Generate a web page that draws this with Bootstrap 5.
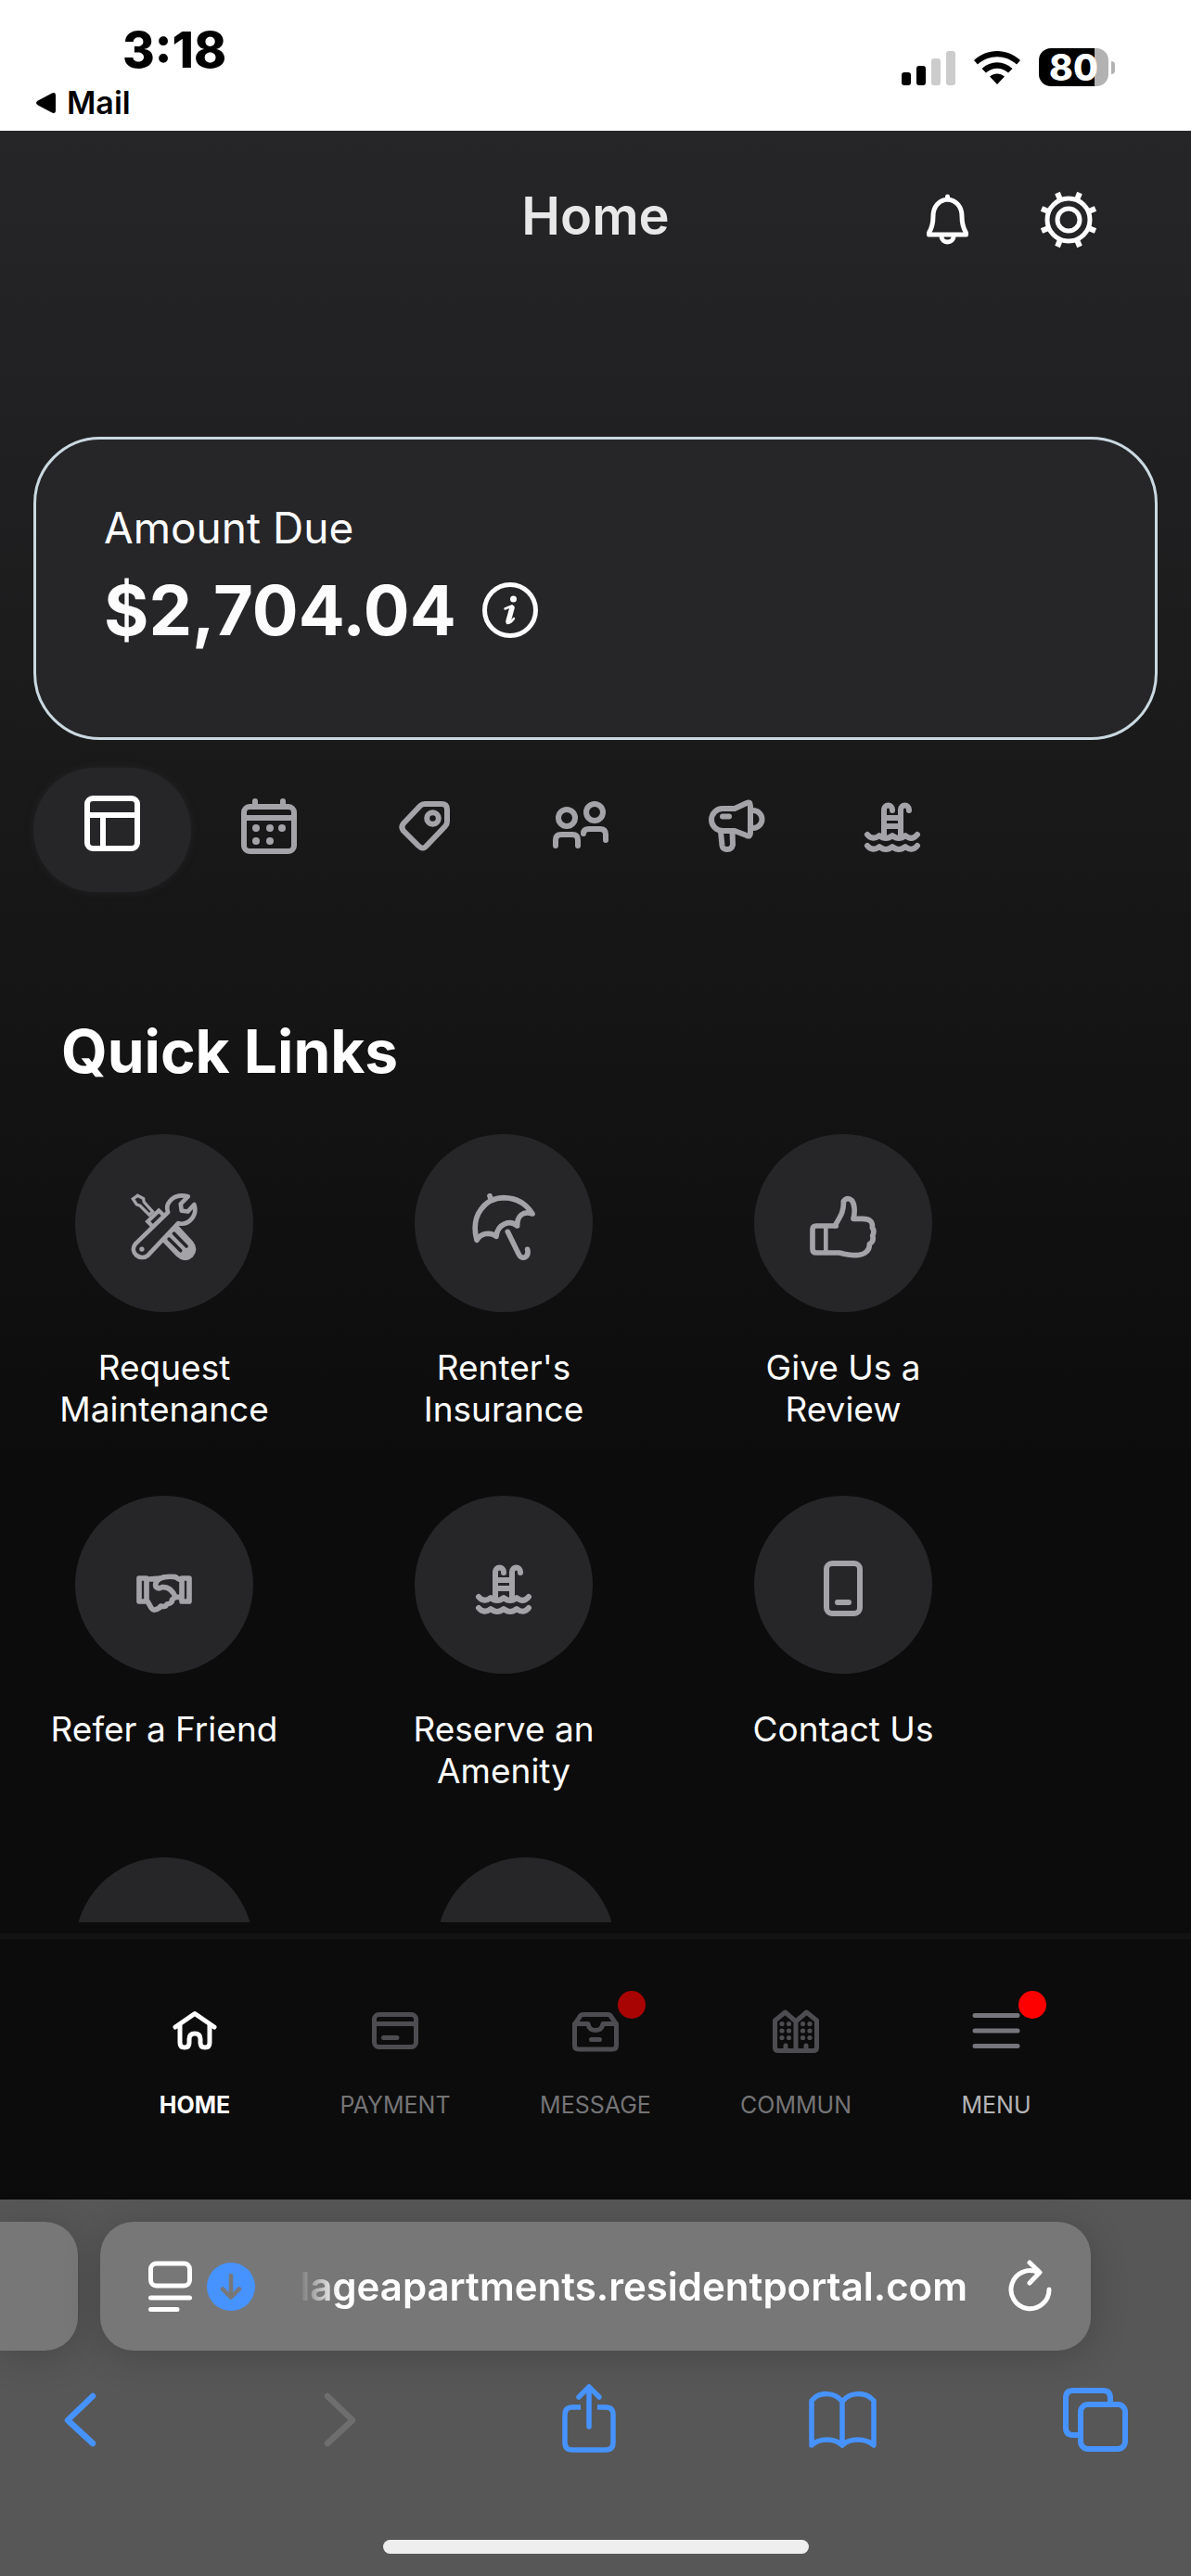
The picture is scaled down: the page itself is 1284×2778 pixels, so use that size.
<!DOCTYPE html>
<html lang="en">
<head>
<meta charset="utf-8">
<meta name="viewport" content="width=device-width, initial-scale=1">
<title>Home</title>
<link href="https://cdn.jsdelivr.net/npm/bootstrap@5.3.0/dist/css/bootstrap.min.css" rel="stylesheet">
<style>
body{font-family:Inter,"Liberation Sans",sans-serif;background:#0c0c0c;color:#fff}
svg{display:block;flex:none;fill:none;stroke:currentColor;stroke-linecap:round;stroke-linejoin:round}
svg.solid{stroke:none}
.btn-bare{border:0;padding:0;background:none;color:inherit;display:block}
.status{background:#fff;color:#000;padding:28px 82px 11px 36px}
.clock{font-size:53px;line-height:52px;font-weight:800;padding-left:96px}
.back-app{font-size:34px;line-height:38px;font-weight:600;color:#000;gap:12px;margin-top:12px}
.status-icons{gap:19px;padding-top:24px}
.battery{width:75px;height:41px;border-radius:13px;background:linear-gradient(90deg,#000 60px,#b2b2b2 60px);color:#fff;font-size:39px;line-height:41px;font-weight:800}
.battery-tip{width:4px;height:14px;border-radius:0 6px 6px 0;background:#b2b2b2;margin-left:3px}
.app{background:linear-gradient(#262628,#0c0c0c 64%);min-height:0}
.topbar{display:grid;grid-template-columns:1fr auto 1fr;padding:62px 102px 200px}
.page-title{font-size:56px;line-height:60px;font-weight:600;color:#e8e8e8}
.topbar-actions{gap:70px}
.due{margin:0 36px;border:3px solid #cad9e1;border-radius:72px;background:#262628;padding:65px 73px 97px;color:#fcfcfd}
.due-label{font-size:46px;line-height:60px}
.due-sum{font-size:74px;line-height:80px;font-weight:700;margin-top:19px;gap:28px}
.tabs-row{margin:30px 36px 0;color:#a4a4a8}
.tab-btn{width:168px;height:134px;padding-top:27px}
.tab-btn.active{width:170px;border-radius:72px;background:#262628;color:#fff;box-shadow:0 0 8px rgba(54,54,58,.4)}
.section-title{font-size:64px;line-height:76px;font-weight:700;margin:134px 66px 51px}
.links-grid{padding-left:36px;gap:71px}
.links-row{gap:84px}
.quick{width:282px;color:#fff;text-decoration:none}
.quick-wide{width:330px}
.quick-icon{width:192px;height:192px;border-radius:50%;background:#262628;color:#a4a4a8;padding-top:8px}
.quick-label{font-size:37px;line-height:45px;max-width:258px;min-height:90px;margin-top:37px;text-align:center}
.tabbar{margin-top:12px;border-top:6px solid #131313;background:#0c0c0c;padding:72px 102px 87px}
.tabbar a{flex:1 1 0;color:#4d4d51;text-decoration:none;font-size:25px;line-height:30px}
.tabbar span.cap{color:#747476;margin-top:38px}
.tabbar a.active,.tabbar a.active span.cap{color:#fff;font-weight:700}
.tabbar a.menu{color:#75757b}
.tabbar a.menu span.cap{color:#b4b4b6}
.dot{position:absolute;left:52px;top:-16px;width:30px;height:30px;border-radius:50%;background:#f00}
.dot-dim{background:#a90404}
.browser{background:#575757;padding:24px 0}
.addr-row{gap:24px}
.addr-prev{flex:none;width:84px;border-radius:0 36px 36px 0;background:#777;box-shadow:0 6px 40px rgba(0,0,0,.18)}
.addr{height:139px;margin-right:108px;border-radius:36px;background:#777;padding:0 39px 0 48px;box-shadow:0 6px 40px rgba(0,0,0,.18);min-width:0}
.addr-url{flex:1 1 0;min-width:0;margin:0 40px 0 46px;font-size:42px;line-height:56px;font-weight:600;text-align:right;white-space:nowrap;-webkit-mask-image:linear-gradient(90deg,transparent,#000 44px);mask-image:linear-gradient(90deg,transparent,#000 44px)}
.loader{margin-left:10px}
.tools-row{padding:35px 63px 0 46px;color:#4692ff}
.tools-row button:disabled{color:#6e6e6e}
.grip{width:459px;height:15px;border-radius:8px;background:#eee;margin:89px auto 0}
</style>
<script src="https://cdn.jsdelivr.net/npm/bootstrap@5.3.0/dist/js/bootstrap.bundle.min.js"></script>
</head>
<body class="vh-100 d-flex flex-column overflow-hidden">

<svg width="0" height="0" class="position-absolute" aria-hidden="true">
  <symbol id="pool" viewBox="0 0 72 72"><path d="M27 47V18a4.500 4.500 0 0 1 9 0v1M45 47V18a4.500 4.500 0 0 1 9 0v1M27 27h18M27 36h18M9 45q6 7 13 1q7 6 14 0q7 6 14 0q7 6 13-1M9 57q6 7 13 1q7 6 14 0q7 6 14 0q7 6 13-1"/></symbol>
</svg>

<header class="status d-flex justify-content-between align-items-start">
  <div>
    <div class="clock">3:18</div>
    <button class="btn-bare back-app d-flex align-items-center" type="button">
      <svg class="solid" width="24" height="24" viewBox="0 0 24 24"><path fill="#000" d="M5 9.500 20 1.500Q24 0 24 4V20Q24 24 20 22.500L5 14.500Q1 12 5 9.500Z"/></svg>Mail
    </button>
  </div>
  <div class="status-icons d-flex align-items-center">
    <svg class="solid" width="58" height="38" viewBox="0 0 58 38"><g fill="#000"><rect y="24" width="10" height="14" rx="3"/><rect x="16" y="17" width="10" height="21" rx="3"/></g><g fill="#ccc"><rect x="32" y="9" width="10" height="29" rx="3"/><rect x="48" y="1" width="10" height="37" rx="3"/></g></svg>
    <svg class="solid" width="52" height="38" viewBox="0 0 52 38"><path fill="#000" d="M1 11C15-2.500 37-2.500 51 11L47 15.500C35 4.500 17 4.500 5 15.500ZM9.500 20C19 11 33 11 42.500 20L38 24.500C31 18 21 18 14 24.500ZM18 28.500C23 24.500 29 24.500 34 28.500L26 37Z"/></svg>
    <div class="d-flex align-items-center"><div class="battery text-center">80</div><div class="battery-tip"></div></div>
  </div>
</header>

<div class="app flex-grow-1 d-flex flex-column">
<main class="flex-grow-1 overflow-hidden">
  <div class="topbar align-items-center">
    <span></span>
    <h1 class="page-title mb-2">Home</h1>
    <div class="topbar-actions d-flex justify-content-end">
      <button class="btn-bare" type="button" aria-label="Notifications"><svg width="60" height="60" viewBox="0 0 60 60" stroke-width="5"><path d="M29.500 5V8C20 9 14 16 14 26C14 36 12 40 9.500 44V46H49.500V44C47 40 45 36 45 26C45 16 39 9 29.500 8M23 48a6.500 6 0 0 0 13 0"/></svg></button>
      <button class="btn-bare" type="button" aria-label="Settings"><svg width="60" height="60" viewBox="0 0 60 60" stroke-width="5" overflow="visible"><circle cx="30" cy="30" r="23"/><circle cx="30" cy="30" r="12"/><path stroke-width="6" stroke-linecap="butt" d="M39.200 7.800 42 1M52.200 20.800 59 18M52.200 39.200 59 42M39.200 52.200 42 59M20.800 52.200 18 59M7.800 39.200 1 42M7.800 20.800 1 18M20.800 7.800 18 1"/></svg></button>
    </div>
  </div>

  <section class="due">
    <div class="due-label">Amount Due</div>
    <div class="due-sum d-flex align-items-center">$2,704.04
      <button class="btn-bare" type="button" aria-label="Amount details"><svg width="60" height="60" viewBox="0 0 60 60" stroke-width="5"><circle cx="30" cy="30" r="27.500"/><circle cx="33.500" cy="18" r="3.500" fill="currentColor" stroke="none"/><path stroke-width="5.500" d="M32 27.500 28 42"/><path stroke-width="2.500" d="M24.500 28.500Q29 26.500 32 25.500M27 44Q31 43.500 34 39"/></svg></button>
    </div>
  </section>

  <div class="tabs-row d-flex" role="tablist">
    <button class="btn-bare tab-btn d-flex align-items-start justify-content-center active" type="button" role="tab" aria-label="Dashboard"><svg width="72" height="72" viewBox="0 0 72 72" stroke-width="6"><rect x="9" y="6" width="54" height="54" rx="6"/><path d="M9 24H63M26 24V60"/></svg></button>
    <button class="btn-bare tab-btn d-flex align-items-start justify-content-center" type="button" role="tab" aria-label="Calendar"><svg width="72" height="72" viewBox="0 0 72 72" stroke-width="6"><rect x="9" y="15" width="54" height="48" rx="6"/><path d="M9 27H63M21 9V15M51 9V15"/><g fill="currentColor" stroke="none"><circle cx="22" cy="38" r="4"/><circle cx="37" cy="38" r="4"/><circle cx="50" cy="38" r="4"/><circle cx="22" cy="52" r="4"/><circle cx="37" cy="52" r="4"/></g></svg></button>
    <button class="btn-bare tab-btn d-flex align-items-start justify-content-center" type="button" role="tab" aria-label="Offers"><svg width="72" height="72" viewBox="0 0 72 72" stroke-width="6"><path d="M36 12H54Q60 12 60 18V31Q60 34 58 36L38 57Q34 62 29 57L13 41Q9.700 37 13 33L31 14Q33 12 36 12Z"/><circle cx="44.500" cy="27.500" r="6.300"/></svg></button>
    <button class="btn-bare tab-btn d-flex align-items-start justify-content-center" type="button" role="tab" aria-label="Groups"><svg width="72" height="72" viewBox="0 0 72 72" stroke-width="6"><circle cx="21" cy="27" r="9"/><circle cx="51" cy="21" r="9"/><path d="M9 57V51Q9 45 15 45H27Q33 45 33 51V57M39 44Q39 39 45 39H57Q63 39 63 45V51"/></svg></button>
    <button class="btn-bare tab-btn d-flex align-items-start justify-content-center" type="button" role="tab" aria-label="Announcements"><svg width="72" height="72" viewBox="0 0 72 72" stroke-width="6"><path d="M34 17H21a12 12 0 0 0 0 24H34L47 46Q51 48 51 43V14Q51 9 47 11ZM54 19a9 9 0 0 1 0 19M21 25.500H28M19 42 20.500 57Q21 61 26 61T32 56L31.500 42"/></svg></button>
    <button class="btn-bare tab-btn d-flex align-items-start justify-content-center" type="button" role="tab" aria-label="Amenities"><svg width="72" height="72" stroke-width="6"><use href="#pool"/></svg></button>
  </div>

  <h2 class="section-title">Quick Links</h2>
  <div class="links-grid d-flex flex-column">
    <div class="links-row d-flex">
      <a href="#" class="quick d-flex flex-column align-items-center">
        <span class="quick-icon d-flex align-items-center justify-content-center"><svg width="72" height="72" viewBox="62 80 217 217" stroke-width="14"><path fill="currentColor" stroke="none" d="M164 236 210 284Q240 310 264 286Q284 262 264 236L214 182Z"/><path stroke="#262628" stroke-width="11" d="M202 210 243 252M186 228 224 266"/><path stroke-width="10" stroke-linejoin="miter" d="M84 87 69 98 81 116 92 120 122 150 133 139 105 108 103 97Z"/><path stroke-width="13" stroke-linecap="butt" stroke-linejoin="miter" d="M168 150 153 136 117 171 132 186"/><path fill="#262628" d="M78 243 183 141C172 112 200 78 248 90L224 114 227 136 247 139 268 116C280 154 248 186 216 177L118 281C94 302 54 272 78 243Z"/><circle cx="98" cy="261" r="8" fill="currentColor" stroke="none"/></svg></span>
        <span class="quick-label">Request Maintenance</span></a>
      <a href="#" class="quick d-flex flex-column align-items-center">
        <span class="quick-icon d-flex align-items-center justify-content-center"><svg width="72" height="72" viewBox="21 51 216 216" stroke-width="17"><path d="M42 202C20 120 70 66 130 65C175 66 205 90 222 117C192 106 172 124 173 156C150 136 110 148 105 190C85 174 55 180 42 202ZM84 59 88 70M142 175 178 248C188 268 212 258 206 232"/></svg></span>
        <span class="quick-label">Renter's Insurance</span></a>
      <a href="#" class="quick d-flex flex-column align-items-center">
        <span class="quick-icon d-flex align-items-center justify-content-center"><svg width="72" height="72" viewBox="1119 51 216 216" stroke-width="17"><path d="M1204 156H1140Q1128 156 1128 168V231Q1128 243 1140 243H1215C1250 252 1280 256 1298 243Q1313 232 1312 215Q1328 205 1322 188Q1330 172 1321 162Q1325 133 1290 133H1260C1266 110 1264 85 1255 74Q1240 60 1228 77C1230 110 1218 125 1200 156"/><path stroke-width="14" d="M1171 156V243"/></svg></span>
        <span class="quick-label">Give Us a Review</span></a>
    </div>
    <div class="links-row d-flex">
      <a href="#" class="quick d-flex flex-column align-items-center">
        <span class="quick-icon d-flex align-items-center justify-content-center"><svg width="72" height="72" viewBox="33 21 216 216" stroke-width="17"><path d="M60 96H84V171H60ZM198 96H222V171H198ZM90 99 126 96C145 90 165 90 178 92Q186 98 196 102M138 93C118 98 110 112 114 124Q122 132 134 125C155 122 170 140 178 157H194M88 172C98 190 102 200 110 198Q124 196 130 186Q146 190 150 180Q168 176 166 166L178 157"/></svg></span>
        <span class="quick-label">Refer a Friend</span></a>
      <a href="#" class="quick d-flex flex-column align-items-center">
        <span class="quick-icon d-flex align-items-center justify-content-center"><svg width="72" height="72" stroke-width="6"><use href="#pool"/></svg></span>
        <span class="quick-label">Reserve an Amenity</span></a>
      <a href="#" class="quick d-flex flex-column align-items-center">
        <span class="quick-icon d-flex align-items-center justify-content-center"><svg width="72" height="72" viewBox="0 0 72 72" stroke-width="6"><rect x="18" y="9" width="36" height="54" rx="6"/><path d="M30 51H42"/></svg></span>
        <span class="quick-label">Contact Us</span></a>
    </div>
    <div class="links-row d-flex">
      <div class="quick d-flex flex-column align-items-center"><span class="quick-icon"></span></div>
      <div class="quick quick-wide d-flex flex-column align-items-center"><span class="quick-icon"></span></div>
    </div>
  </div>
</main>

<nav class="tabbar d-flex">
  <a href="#" class="active d-flex flex-column align-items-center"><span class="position-relative"><svg width="56" height="54" viewBox="0 0 56 54" stroke-width="5"><path d="M7 23 28 8.500 49 23M12 21V40q0 5 5 5t5-5V36q0-6 6-6t6 6v4q0 5 5 5t5-5V21"/></svg></span><span class="cap">HOME</span></a>
  <a href="#" class="d-flex flex-column align-items-center"><span class="position-relative"><svg width="56" height="54" viewBox="0 0 56 54" stroke-width="5"><rect x="5.500" y="9.500" width="45" height="35" rx="5"/><path d="M5.500 19.500H50.500M15.500 34.500H30"/></svg></span><span class="cap">PAYMENT</span></a>
  <a href="#" class="d-flex flex-column align-items-center"><span class="position-relative"><svg width="56" height="54" viewBox="0 0 56 54" stroke-width="5"><path d="M5.500 20 11 12Q12 9.500 15 9.500H41Q44 9.500 45 12L50.500 20V43Q50.500 47 46 47H10Q5.500 47 5.500 43ZM5.500 19.500H20Q21 26.500 28 26.500T36 19.500H50.500M23.500 36.500H32.500"/></svg><span class="dot dot-dim"></span></span><span class="cap">MESSAGE</span></a>
  <a href="#" class="d-flex flex-column align-items-center"><span class="position-relative"><svg width="56" height="54" viewBox="0 0 56 54" stroke-width="5"><path d="M5.500 16 16.500 7 28 17 39.500 7 50.500 16V45Q50.500 48.500 47 48.500H9Q5.500 48.500 5.500 45ZM28 16V48M17 43V47M39 43V47"/><g fill="currentColor" stroke="none"><circle cx="13" cy="19.500" r="2.600"/><circle cx="20.500" cy="19.500" r="2.600"/><circle cx="35.500" cy="19.500" r="2.600"/><circle cx="43" cy="19.500" r="2.600"/><circle cx="13" cy="27" r="2.600"/><circle cx="20.500" cy="27" r="2.600"/><circle cx="35.500" cy="27" r="2.600"/><circle cx="43" cy="27" r="2.600"/><circle cx="13" cy="34.500" r="2.600"/><circle cx="20.500" cy="34.500" r="2.600"/><circle cx="35.500" cy="34.500" r="2.600"/><circle cx="43" cy="34.500" r="2.600"/></g></svg></span><span class="cap">COMMUN</span></a>
  <a href="#" class="menu d-flex flex-column align-items-center"><span class="position-relative"><svg width="56" height="54" viewBox="0 0 56 54" stroke-width="5" stroke-linecap="butt"><path d="M5 10.500H51M5 27H51M5 43.500H51"/></svg><span class="dot"></span></span><span class="cap">MENU</span></a>
</nav>
</div>

<footer class="browser">
  <div class="addr-row d-flex">
    <div class="addr-prev"></div>
    <div class="addr flex-grow-1 d-flex align-items-center">
      <button class="btn-bare" type="button" aria-label="Page settings"><svg width="56" height="58" viewBox="0 0 56 58" stroke-width="5"><rect x="6.500" y="4" width="42" height="24" rx="6"/><path d="M6.500 41H48.500M6.500 53.500H35"/></svg></button>
      <button class="btn-bare loader" type="button" aria-label="Downloads"><svg class="solid" width="54" height="54" viewBox="0 0 54 54"><circle cx="27" cy="27" r="26" fill="#4692ff"/><path stroke="#777" stroke-width="4.500" d="M27 15V38M18 29.500 27 38.500 36 29.500"/></svg></button>
      <button class="btn-bare addr-url" type="button">lageapartments.residentportal.com</button>
      <button class="btn-bare" type="button" aria-label="Reload"><svg width="54" height="58" viewBox="0 0 54 58" stroke-width="5"><path d="M48 32A20.500 20.500 0 1 1 37 14M27 3 38 13.500 27 25"/></svg></button>
    </div>
  </div>
  <div class="tools-row d-flex justify-content-between">
    <button class="btn-bare" type="button" aria-label="Back"><svg width="80" height="80" viewBox="0 0 80 80" stroke-width="6.500"><path d="M54 14 27 40 54 65"/></svg></button>
    <button class="btn-bare" type="button" aria-label="Forward" disabled><svg width="80" height="80" viewBox="0 0 80 80" stroke-width="6.500"><path d="M33 14 60 40 33 65"/></svg></button>
    <button class="btn-bare" type="button" aria-label="Share"><svg width="80" height="80" viewBox="0 0 80 80" stroke-width="5.500"><path stroke-linecap="butt" d="M32 26H23Q15 26 15 34V64Q15 72 23 72H59Q67 72 67 64V34Q67 26 59 26H50"/><path d="M41 47V5M30 15 41 4 52 15"/></svg></button>
    <button class="btn-bare" type="button" aria-label="Bookmarks"><svg width="80" height="80" viewBox="0 0 80 80" stroke-width="5.500"><path d="M41 20C33 9 16 9 8 19V67C16 59 33 59 41 67C49 59 66 59 75 67V19C66 9 49 9 41 20V66"/></svg></button>
    <button class="btn-bare" type="button" aria-label="Tabs"><svg width="80" height="80" viewBox="0 0 80 80" stroke-width="6"><rect x="24" y="23" width="48" height="48" rx="8"/><path stroke-linecap="butt" d="M24 56H16Q8 56 8 48V16Q8 8 16 8H48Q56 8 56 16V23"/></svg></button>
  </div>
  <div class="grip"></div>
</footer>
</body>
</html>
